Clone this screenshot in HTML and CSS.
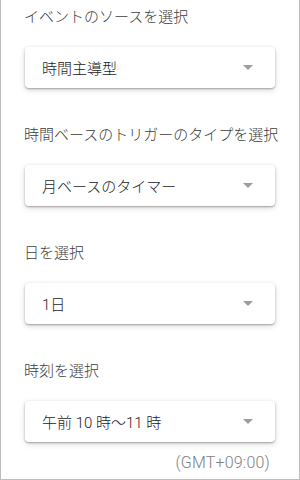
FILE: index.html
```html
<!DOCTYPE html>
<html lang="ja">
<head>
    <meta charset="UTF-8">
    <meta name="viewport" content="width=device-width, initial-scale=1.0">
    <title>トリガーを追加</title>
    <link rel="stylesheet" href="styles.css">
</head>
<body>
    <div class="page">
        <div class="field">
            <div class="field-label">イベントのソースを選択</div>
            <div class="select">
                <span class="select-value">時間主導型</span>
                <span class="select-arrow"></span>
            </div>
        </div>

        <div class="field">
            <div class="field-label">時間ベースのトリガーのタイプを選択</div>
            <div class="select">
                <span class="select-value">月ベースのタイマー</span>
                <span class="select-arrow"></span>
            </div>
        </div>

        <div class="field">
            <div class="field-label">日を選択</div>
            <div class="select">
                <span class="select-value">1日</span>
                <span class="select-arrow"></span>
            </div>
        </div>

        <div class="field last">
            <div class="field-label">時刻を選択</div>
            <div class="select">
                <span class="select-value">午前 10 時〜11 時</span>
                <span class="select-arrow"></span>
            </div>
            <div class="field-hint">(GMT+09:00)</div>
        </div>
    </div>
</body>
</html>
```

FILE: styles.css
```css
* {
    margin: 0;
    padding: 0;
    box-sizing: border-box;
}

body {
    font-family: Roboto, "Noto Sans CJK JP", sans-serif;
    background: #fff;
}

.page {
    width: 300px;
    height: 480px;
    border: 1px solid #bdbdbd;
    border-top: none;
    padding: 7px 24px 0 24px;
    overflow: hidden;
}

.field {
    margin-bottom: 37px;
}

.field.last {
    margin-bottom: 0;
}

.field-label {
    font-size: 15px;
    font-weight: 300;
    line-height: 20px;
    color: #3c3c3c;
    margin-left: -1px;
    margin-right: -4px;
    white-space: nowrap;
}

.select {
    display: flex;
    align-items: center;
    justify-content: space-between;
    height: 41px;
    margin-top: 20px;
    padding: 0 22px 0 17px;
    background: #fff;
    border-radius: 4px;
    box-shadow: 0 1px 2px rgba(0,0,0,0.3), 0 2px 6px rgba(0,0,0,0.15);
}

.select-value {
    font-size: 15px;
    font-weight: 300;
    color: #222;
    white-space: nowrap;
}

.select-arrow {
    width: 0;
    height: 0;
    border-left: 5px solid transparent;
    border-right: 5px solid transparent;
    border-top: 5px solid #9e9e9e;
}

.field-hint {
    margin-top: 11px;
    padding-right: 5px;
    text-align: right;
    font-size: 16px;
    font-weight: 300;
    line-height: 20px;
    letter-spacing: 0.2px;
    color: #808080;
}
```
